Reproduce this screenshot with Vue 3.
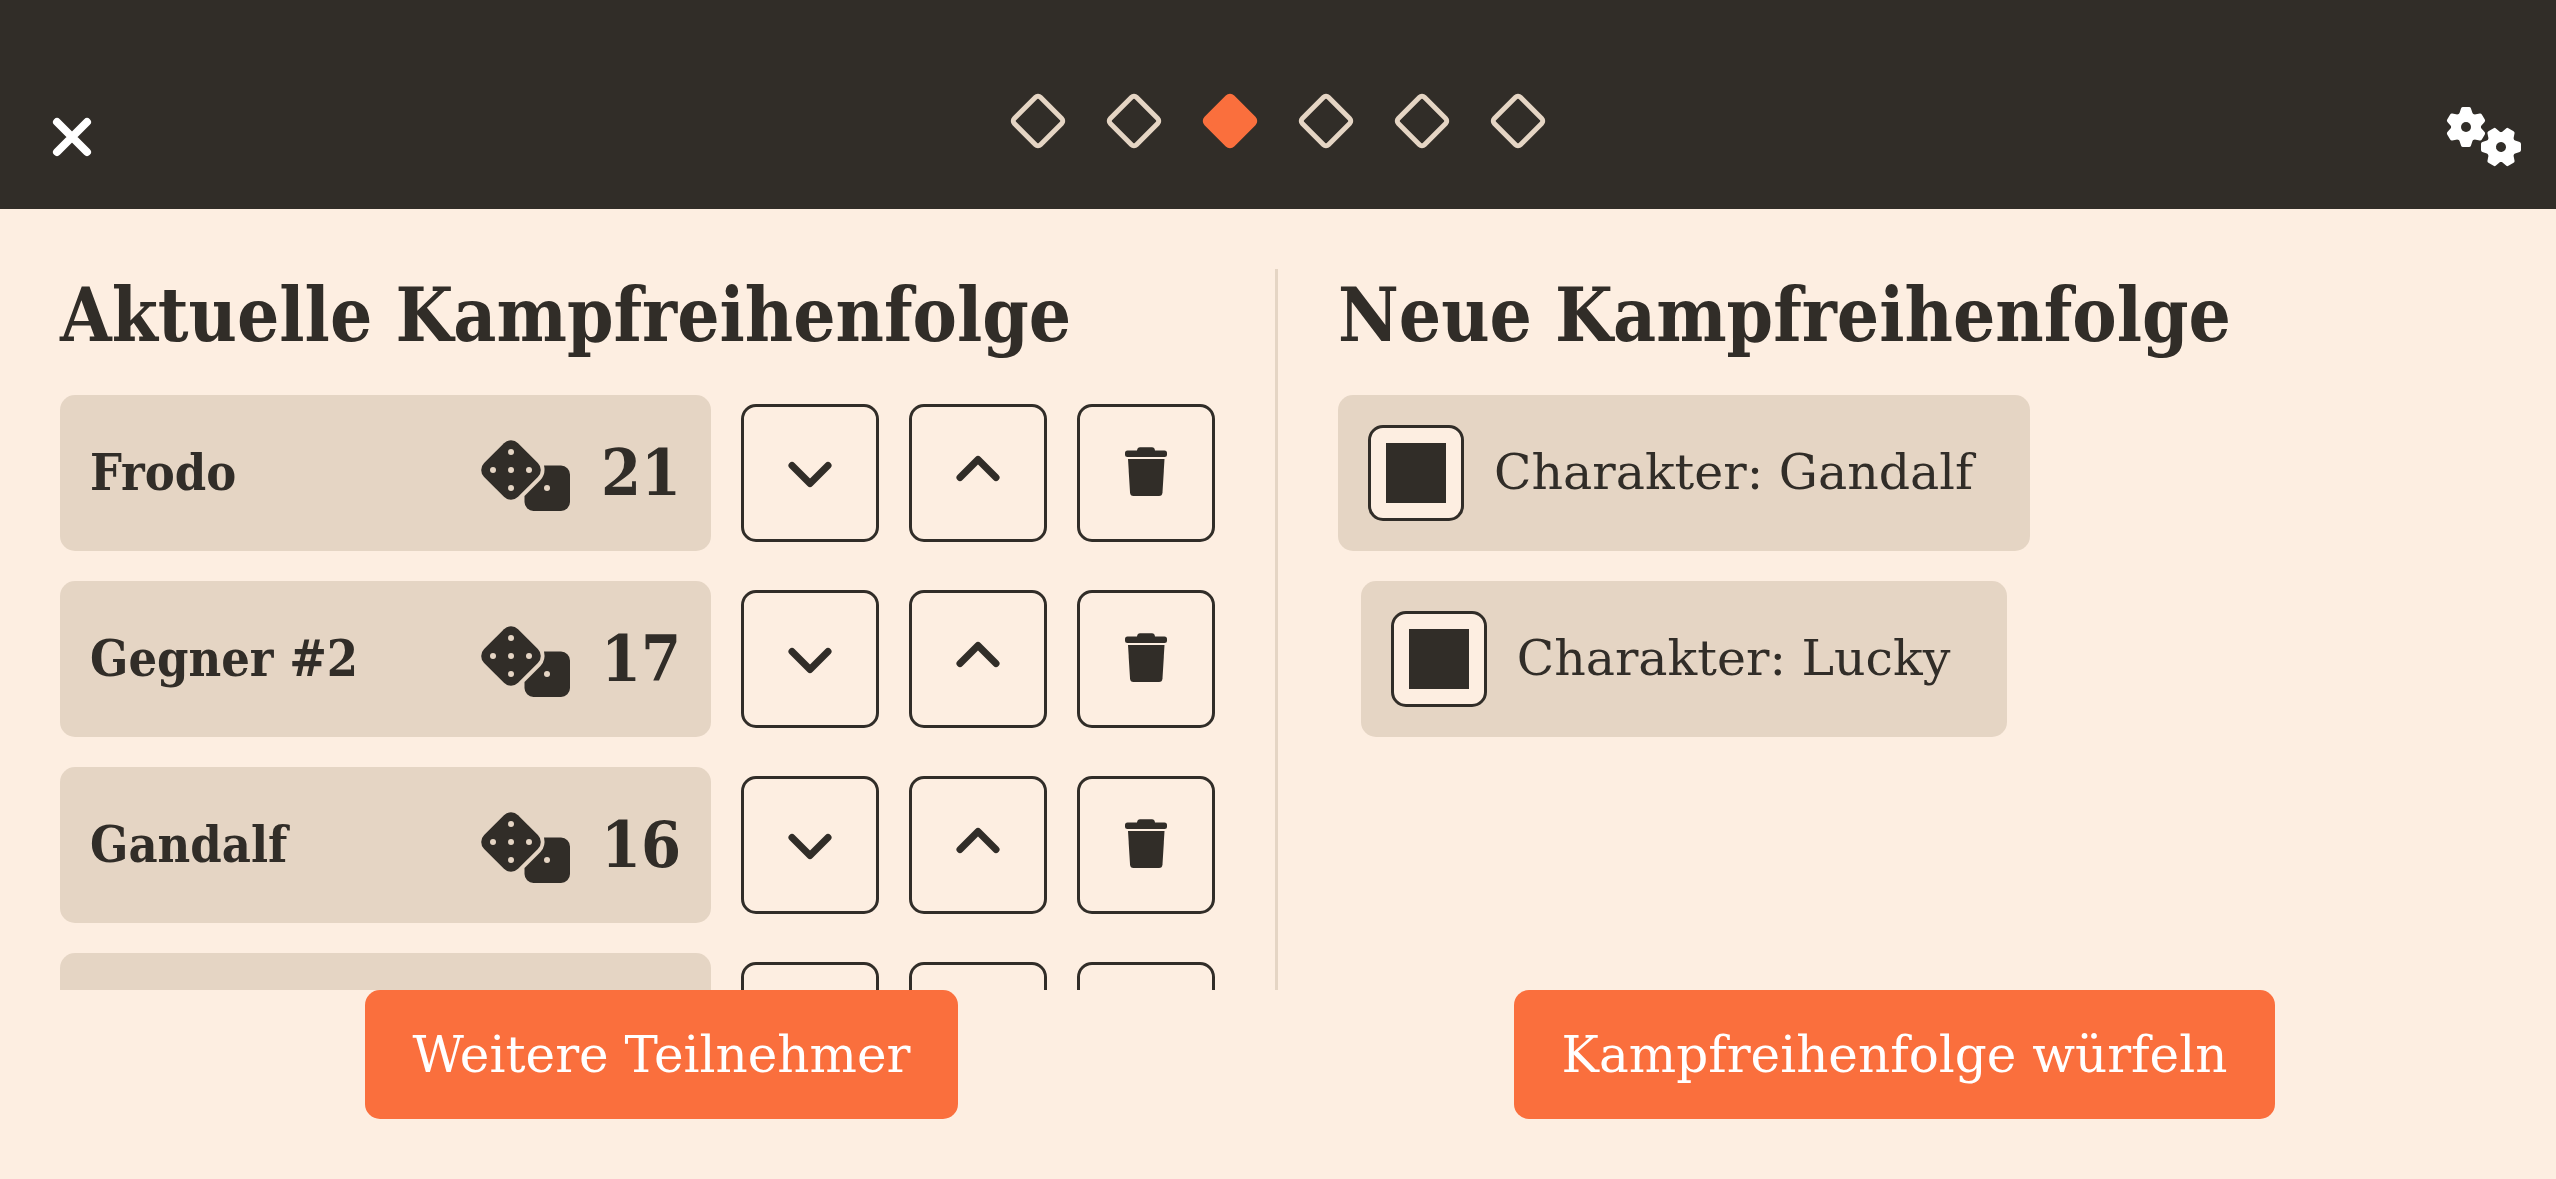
<script setup>
import { ref } from 'vue'

const steps = [1, 2, 3, 4, 5, 6]
const currentStep = 3

const participants = ref([
  { id: 1, name: 'Frodo', roll: 21 },
  { id: 2, name: 'Gegner #2', roll: 17 },
  { id: 3, name: 'Gandalf', roll: 16 },
  { id: 4, name: '', roll: null },
])

const candidates = ref([
  { id: 'gandalf', label: 'Charakter: Gandalf', checked: true },
  { id: 'lucky', label: 'Charakter: Lucky', checked: true },
])

function move(index, delta) {
  const target = index + delta
  if (target < 0 || target >= participants.value.length) return
  const [entry] = participants.value.splice(index, 1)
  participants.value.splice(target, 0, entry)
}

function remove(index) {
  participants.value.splice(index, 1)
}
</script>

<template>
  <div class="page">
    <header class="topbar">
      <button class="icon-button" type="button" aria-label="Schließen">
        <svg width="40" height="40" viewBox="0 0 40 40" fill="none" stroke="#fff" stroke-width="8" stroke-linecap="round">
          <path d="M5 5 35 35M35 5 5 35" />
        </svg>
      </button>
      <ol class="steps">
        <li v-for="step in steps" :key="step" class="step" :class="{ active: step === currentStep }"></li>
      </ol>
      <button class="icon-button" type="button" aria-label="Einstellungen">
        <svg width="76" height="60" viewBox="0 0 76 60">
          <g transform="translate(20 20)" fill="#fff" stroke="#fff" stroke-width="4" stroke-linejoin="round">
            <circle r="13" />
            <path v-for="a in [0, 60, 120]" :key="a" :transform="`rotate(${a})`" d="M-3-18H3L5-12V12L3 18H-3L-5 12V-12Z" />
            <circle r="5" fill="#312d28" stroke="none" />
          </g>
          <g transform="translate(55 40) rotate(30)" fill="#fff" stroke="#fff" stroke-width="4" stroke-linejoin="round">
            <circle r="13" />
            <path v-for="a in [0, 60, 120]" :key="a" :transform="`rotate(${a})`" d="M-3-18H3L5-12V12L3 18H-3L-5 12V-12Z" />
            <circle r="5" fill="#312d28" stroke="none" />
          </g>
        </svg>
      </button>
    </header>

    <main class="columns">
      <section class="column current">
        <h1>Aktuelle Kampfreihenfolge</h1>
        <ul class="list">
          <li v-for="(p, i) in participants" :key="p.id" class="row">
            <div class="card participant">
              <span class="name">{{ p.name }}</span>
              <svg class="dice" width="90" height="72" viewBox="0 0 90 72" aria-hidden="true">
                <rect x="6" y="6" width="48" height="48" rx="10" transform="rotate(45 30 30)" fill="#312d28" />
                <path d="M63 25.500H80A9 9 0 0 1 89 34.500V62A9 9 0 0 1 80 71H52.500A9 9 0 0 1 43.500 62V56L59.500 40Q65 34 63 25.500Z" fill="#312d28" />
                <g fill="#e5d5c4">
                  <circle cx="30" cy="12" r="3" />
                  <circle cx="12" cy="30" r="3" />
                  <circle cx="30" cy="30" r="3" />
                  <circle cx="48" cy="30" r="3" />
                  <circle cx="30" cy="48" r="3" />
                  <circle cx="66" cy="48" r="3" />
                </g>
              </svg>
              <span class="roll">{{ p.roll }}</span>
            </div>
            <button class="action" type="button" aria-label="Nach unten" @click="move(i, 1)">
              <svg width="54" height="54" viewBox="0 0 54 54" fill="none" stroke="#312d28" stroke-width="7" stroke-linecap="round" stroke-linejoin="round">
                <path d="M9 19.500 27 37.500 45 19.500" />
              </svg>
            </button>
            <button class="action" type="button" aria-label="Nach oben" @click="move(i, -1)">
              <svg width="54" height="54" viewBox="0 0 54 54" fill="none" stroke="#312d28" stroke-width="7" stroke-linecap="round" stroke-linejoin="round">
                <path d="M9 31.500 27 13.500 45 31.500" />
              </svg>
            </button>
            <button class="action" type="button" aria-label="Entfernen" @click="remove(i)">
              <svg width="54" height="54" viewBox="0 0 54 54" fill="#312d28">
                <path d="M8.500 4.500H18Q18.500 1.200 21 1.200H33Q35.500 1.200 36 4.500H45.500Q48 4.500 48 7V8.500Q48 11 45.500 11H8.500Q6 11 6 8.500V7Q6 4.500 8.500 4.500Z" />
                <path d="M9 13H45.500L43.500 46.500Q43.200 50 40 50H14.500Q11.300 50 11 46.500Z" />
              </svg>
            </button>
          </li>
        </ul>
      </section>

      <section class="column next">
        <h1>Neue Kampfreihenfolge</h1>
        <ul class="list candidates">
          <li v-for="c in candidates" :key="c.id" class="card candidate">
            <input :id="c.id" v-model="c.checked" type="checkbox" />
            <label :for="c.id">{{ c.label }}</label>
          </li>
        </ul>
      </section>
    </main>

    <footer class="footer">
      <div class="slot"><button class="primary" type="button">Weitere Teilnehmer</button></div>
      <div class="slot"><button class="primary" type="button">Kampfreihenfolge würfeln</button></div>
    </footer>
  </div>
</template>

<style>
body {
  margin: 0;
  background: #fdeee1;
}
</style>

<style scoped>
* {
  box-sizing: border-box;
}

.page {
  display: flex;
  flex-direction: column;
  height: 100vh;
  background: #fdeee1;
  color: #312d28;
  font-family: "DejaVu Serif", serif;
  font-size: 49px;
  line-height: 60px;
}

button {
  font: inherit;
  color: inherit;
  padding: 0;
  border: 0;
  background: none;
  cursor: pointer;
}

svg {
  display: block;
}

.topbar {
  display: grid;
  grid-template-columns: 1fr auto 1fr;
  align-items: end;
  flex: none;
  padding: 84px 34px 42px;
  background: #312d28;
}

.icon-button {
  display: flex;
  align-items: center;
  justify-content: center;
  width: 76px;
  height: 60px;
}

.icon-button:last-child {
  justify-self: end;
}

.steps {
  display: flex;
  gap: 54px;
  margin: 0;
  padding: 16px 0 25px;
  list-style: none;
}

.step {
  width: 42px;
  height: 42px;
  border: 5px solid #e5d5c4;
  border-radius: 6px;
  transform: rotate(45deg);
}

.step.active {
  border-color: #fa6f3d;
  background: #fa6f3d;
}

.columns {
  display: grid;
  grid-template-columns: 1fr 1fr;
  flex: 1;
  min-height: 0;
  padding: 60px 0 0;
}

.column {
  min-height: 0;
  overflow: hidden;
  padding: 0 60px;
}

.current {
  border-right: 3px solid #e5d5c4;
}

h1,
.name,
.roll {
  font-family: "DejaVu Serif Condensed", "DejaVu Serif", serif;
  font-weight: 700;
}

h1 {
  margin: 0 0 34px;
  font-size: 74px;
  line-height: 92px;
  white-space: nowrap;
}

.list {
  display: flex;
  flex-direction: column;
  gap: 30px;
  margin: 0;
  padding: 0;
  list-style: none;
}

.row {
  display: flex;
  align-items: center;
  gap: 30px;
}

.card {
  display: flex;
  align-items: center;
  height: 156px;
  padding: 0 30px;
  border-radius: 15px;
  background: #e5d5c4;
}

.participant {
  flex: 1;
}

.name {
  flex: 1;
  font-size: 50px;
}

.roll {
  margin-left: 30px;
  font-size: 64px;
}

.dice {
  margin-top: 6px;
}

.action {
  display: flex;
  align-items: center;
  justify-content: center;
  width: 138px;
  height: 138px;
  border: 3px solid #312d28;
  border-radius: 15px;
}

.candidates {
  align-items: center;
  width: fit-content;
}

.candidate {
  gap: 30px;
  padding-right: 57px;
}

.candidate input {
  appearance: none;
  width: 96px;
  height: 96px;
  margin: 0;
  padding: 15px;
  border: 3px solid #312d28;
  border-radius: 15px;
  background: #fdeee1;
}

.candidate input:checked {
  background: linear-gradient(#312d28, #312d28) content-box, #fdeee1;
}

.footer {
  display: grid;
  grid-template-columns: 1fr 1fr;
  flex: none;
  padding: 0 45px 60px;
}

.slot {
  display: flex;
  justify-content: center;
}

.primary {
  height: 129px;
  padding: 0 48px;
  border-radius: 15px;
  background: #fa6f3d;
  color: #fff;
  font-size: 50px;
}
</style>
